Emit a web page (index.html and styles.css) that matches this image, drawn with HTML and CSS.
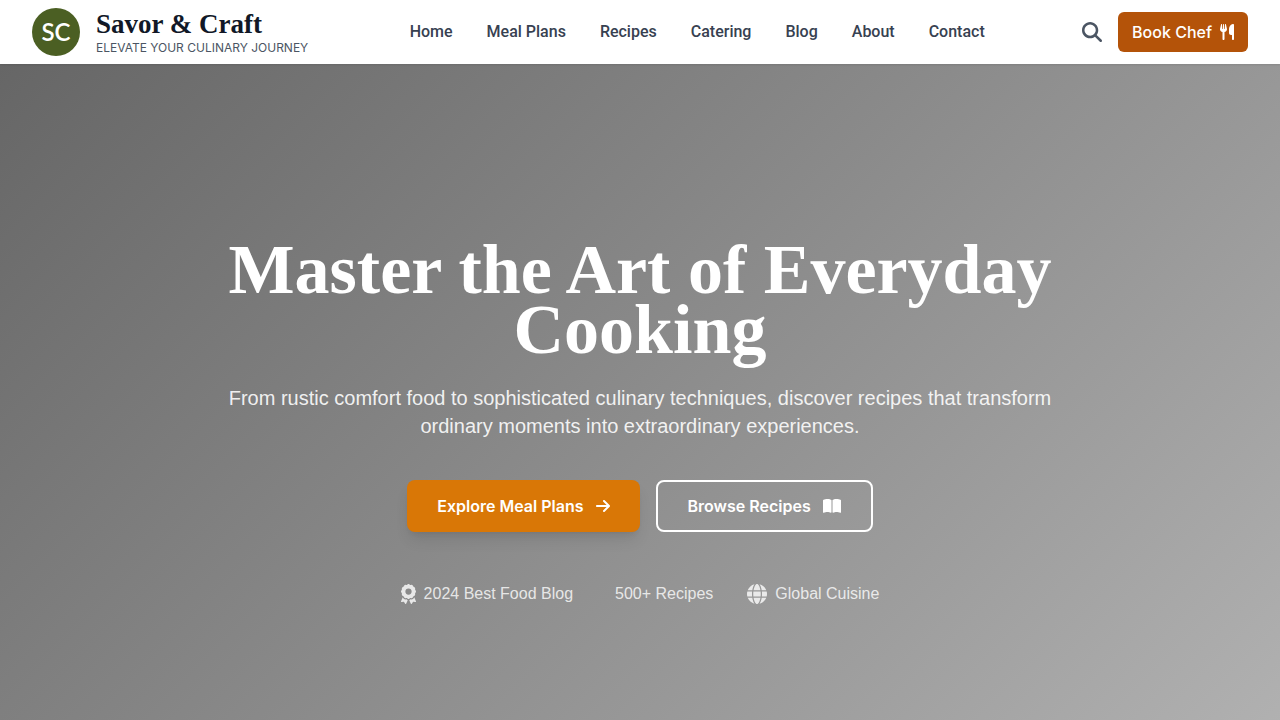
FILE: index.html
```html
<!DOCTYPE html>
<html lang="en">
<head>
  <meta charset="UTF-8">
  <meta name="viewport" content="width=device-width, initial-scale=1.0">
  <title>Savor &amp; Craft</title>
  <link rel="stylesheet" href="styles.css">
</head>
<body>
  <header class="header">
    <a href="#" class="brand">
      <span class="brand-logo">SC</span>
      <span class="brand-text">
        <span class="brand-name">Savor &amp; Craft</span>
        <span class="brand-tagline">Elevate Your Culinary Journey</span>
      </span>
    </a>

    <nav class="nav">
      <a href="#">Home</a>
      <a href="#">Meal Plans</a>
      <a href="#">Recipes</a>
      <a href="#">Catering</a>
      <a href="#">Blog</a>
      <a href="#">About</a>
      <a href="#">Contact</a>
    </nav>

    <div class="actions">
      <button type="button" class="search-btn" aria-label="Search">
        <svg class="icon-lg" viewBox="0 0 512 512"><path d="M416 208c0 45.9-14.9 88.3-40 122.7L502.6 457.4c12.5 12.5 12.5 32.8 0 45.3s-32.8 12.5-45.3 0L330.7 376c-34.4 25.2-76.8 40-122.7 40C93.1 416 0 322.9 0 208S93.1 0 208 0S416 93.1 416 208zM208 352a144 144 0 1 0 0-288 144 144 0 1 0 0 288z"/></svg>
      </button>
      <a href="#" class="book-btn">
        Book Chef
        <svg class="icon" viewBox="0 0 448 512"><path d="M416 0C400 0 288 32 288 176V288c0 35.3 28.7 64 64 64h32V480c0 17.7 14.3 32 32 32s32-14.3 32-32V352 240 32c0-17.7-14.3-32-32-32zM64 16C64 7.8 57.9 1 49.7 .1S34.2 4.6 32.4 12.5L2.1 148.8C.7 155.1 0 161.5 0 167.9c0 45.9 35.1 83.6 80 87.7V480c0 17.7 14.3 32 32 32s32-14.3 32-32V255.6c44.9-4.1 80-41.8 80-87.7c0-6.4-.7-12.8-2.1-19.1L191.6 12.5c-1.8-8-9.3-13.3-17.4-12.4S160 7.8 160 16V150.2c0 5.4-4.4 9.8-9.8 9.8c-5.1 0-9.3-3.9-9.8-9L127.9 14.6C127.2 6.3 120.3 0 112 0s-15.2 6.3-15.9 14.6L83.7 151c-.5 5.1-4.7 9-9.8 9c-5.4 0-9.8-4.4-9.8-9.8V16z"/></svg>
      </a>
    </div>
  </header>

  <main class="hero">
    <div class="hero-content">
      <h1>Master the Art of Everyday Cooking</h1>
      <p class="hero-text">From rustic comfort food to sophisticated culinary techniques, discover recipes that transform ordinary moments into extraordinary experiences.</p>

      <div class="hero-buttons">
        <a href="#" class="btn btn-primary">
          Explore Meal Plans
          <svg class="icon" viewBox="0 0 448 512"><path d="M438.6 278.6c12.5-12.5 12.5-32.8 0-45.3l-160-160c-12.5-12.5-32.8-12.5-45.3 0s-12.5 32.8 0 45.3L338.8 224 32 224c-17.7 0-32 14.3-32 32s14.3 32 32 32l306.7 0L233.4 393.4c-12.5 12.5-12.5 32.8 0 45.3s32.8 12.5 45.3 0l160-160z"/></svg>
        </a>
        <a href="#" class="btn btn-outline">
          Browse Recipes
          <svg class="icon" viewBox="0 0 576 512"><path d="M249.6 471.5c10.8 3.8 22.4-4.1 22.4-15.5V78.6c0-4.2-1.6-8.4-5-11C247.4 52 202.4 32 144 32C93.5 32 46.3 45.3 18.1 56.1C6.8 60.5 0 71.7 0 83.8V454.1c0 11.9 12.8 20.2 24.1 16.5C55.6 460.1 105.5 448 144 448c33.9 0 79 14 105.6 23.5zm76.8 0C353 462 398.1 448 432 448c38.5 0 88.4 12.1 119.9 22.6c11.3 3.8 24.1-4.6 24.1-16.5V83.8c0-12.1-6.8-23.3-18.1-27.6C529.7 45.3 482.5 32 432 32c-58.4 0-103.4 20-123 35.6c-3.3 2.6-5 6.8-5 11V456c0 11.4 11.7 19.3 22.4 15.5z"/></svg>
        </a>
      </div>

      <ul class="stats">
        <li>
          <svg class="icon-lg" viewBox="0 0 384 512"><path d="M173.8 5.5c11-7.3 25.4-7.3 36.4 0L228 17.2c6 3.9 13 5.8 20.1 5.4l21.3-1.3c13.2-.8 25.6 6.4 31.5 18.2l9.6 19.1c3.2 6.4 8.4 11.5 14.7 14.7L344.5 83c11.8 5.9 19 18.3 18.2 31.5l-1.3 21.3c-.4 7.1 1.5 14.2 5.4 20.1l11.8 17.8c7.3 11 7.3 25.4 0 36.4L366.8 228c-3.9 6-5.8 13-5.4 20.1l1.3 21.3c.8 13.2-6.4 25.6-18.2 31.5l-19.1 9.6c-6.4 3.2-11.5 8.4-14.7 14.7L301 344.5c-5.9 11.8-18.3 19-31.5 18.2l-21.3-1.3c-7.1-.4-14.2 1.5-20.1 5.4l-17.8 11.8c-11 7.3-25.4 7.3-36.4 0L156 366.8c-6-3.9-13-5.8-20.1-5.4l-21.3 1.3c-13.2 .8-25.6-6.4-31.5-18.2l-9.6-19.1c-3.2-6.4-8.4-11.5-14.7-14.7L39.5 301c-11.8-5.9-19-18.3-18.2-31.5l1.3-21.3c.4-7.1-1.5-14.2-5.4-20.1L5.5 210.2c-7.3-11-7.3-25.4 0-36.4L17.2 156c3.9-6 5.8-13 5.4-20.1l-1.3-21.3c-.8-13.2 6.4-25.6 18.2-31.5l19.1-9.6C65 70.2 70.2 65 73.4 58.6L83 39.5c5.9-11.8 18.3-19 31.5-18.2l21.3 1.3c7.1 .4 14.2-1.5 20.1-5.4L173.8 5.5zM272 192a80 80 0 1 0 -160 0 80 80 0 1 0 160 0zM1.3 441.8L44.4 339.3c.2 .1 .3 .2 .4 .4l9.6 19.1c11.7 23.2 36 37.3 62 35.8l21.3-1.3c.2 0 .5 0 .7 .2l17.8 11.8c5.1 3.3 10.5 5.9 16.1 7.7l-37.6 89.3c-2.3 5.5-7.4 9.2-13.3 9.7s-11.6-2.2-14.8-7.2L74.4 455.5l-56.1 8.3c-5.7 .8-11.4-1.5-15-6s-4.3-10.7-2.1-16zm248 60.4L211.7 413c5.6-1.8 11-4.3 16.1-7.7l17.8-11.8c.2-.1 .4-.2 .7-.2l21.3 1.3c26 1.5 50.3-12.6 62-35.8l9.6-19.1c.1-.2 .2-.3 .4-.4l43.2 102.5c2.2 5.3 1.4 11.4-2.1 16s-9.3 6.9-15 6l-56.1-8.3-32.2 49.2c-3.2 5-8.9 7.7-14.8 7.2s-11-4.3-13.3-9.7z"/></svg>
          2024 Best Food Blog
        </li>
        <li class="stat-plain">500+ Recipes</li>
        <li>
          <svg class="icon-lg" viewBox="0 0 512 512"><path d="M352 256c0 22.2-1.2 43.6-3.3 64H163.3c-2.2-20.4-3.3-41.8-3.3-64s1.2-43.6 3.3-64H348.7c2.2 20.4 3.3 41.8 3.3 64zm28.8-64H503.9c5.3 20.5 8.1 41.9 8.1 64s-2.8 43.5-8.1 64H380.8c2.1-20.6 3.2-42 3.2-64s-1.1-43.4-3.2-64zm112.6-32H376.7c-10-63.9-29.8-117.4-55.3-151.6c78.3 20.7 142 77.5 171.9 151.6zm-149.1 0H167.7c6.1-36.4 15.5-68.6 27-94.7c10.5-23.6 22.2-40.7 33.5-51.5C239.4 3.2 248.7 0 256 0s16.6 3.2 27.8 13.8c11.3 10.8 23 27.9 33.5 51.5c11.6 26 20.9 58.2 27 94.7zm-209 0H18.6C48.6 85.9 112.2 29.1 190.6 8.4C165.1 42.6 145.3 96.1 135.3 160zM8.1 192H131.2c-2.1 20.6-3.2 42-3.2 64s1.1 43.4 3.2 64H8.1C2.8 299.5 0 278.1 0 256s2.8-43.5 8.1-64zM194.7 446.6c-11.6-26-20.9-58.2-27-94.6H344.3c-6.1 36.4-15.5 68.6-27 94.6c-10.5 23.6-22.2 40.7-33.5 51.5C272.6 508.8 263.3 512 256 512s-16.6-3.2-27.8-13.8c-11.3-10.8-23-27.9-33.5-51.5zM135.3 352c10 63.9 29.8 117.4 55.3 151.6C112.2 482.9 48.6 426.1 18.6 352H135.3zm358.1 0c-30 74.1-93.6 130.9-171.9 151.6c25.5-34.2 45.2-87.7 55.3-151.6H493.4z"/></svg>
          Global Cuisine
        </li>
      </ul>
    </div>
  </main>
</body>
</html>
```
FILE: styles.css
```css
* {
  box-sizing: border-box;
  margin: 0;
  padding: 0;
}
body {
  font-family: "Liberation Sans", Arial, sans-serif;
  font-size: 16px;
  line-height: 24px;
  background: #fff;
  color: #1f2937;
}
a {
  color: inherit;
  text-decoration: none;
}
svg {
  display: block;
  fill: currentColor;
}
.icon {
  height: 16px;
}
.icon-lg {
  height: 20px;
}

/* Header */
.header {
  position: sticky;
  top: 0;
  z-index: 10;
  display: flex;
  align-items: center;
  justify-content: space-between;
  padding: 8px 32px;
  background: #fff;
  box-shadow: 0 1px 2px rgba(0, 0, 0, 0.1);
}
.brand {
  display: flex;
  align-items: center;
  gap: 16px;
  padding-right: 4px;
}
.brand-logo {
  display: flex;
  align-items: center;
  justify-content: center;
  width: 48px;
  height: 48px;
  border-radius: 50%;
  background: #4b5f23;
  color: #fff;
  font-family: Lato, sans-serif;
  font-size: 24px;
  font-weight: 600;
}
.brand-text {
  display: flex;
  flex-direction: column;
}
.brand-name {
  color: #111827;
  font-family: "Liberation Serif", serif;
  font-size: 27px;
  font-weight: 700;
  line-height: 32px;
}
.brand-tagline {
  color: #4b5563;
  font-family: Inter, sans-serif;
  font-size: 12px;
  line-height: 16px;
  text-transform: uppercase;
}
.nav {
  display: flex;
  gap: 34px;
  color: #374151;
  font-family: Roboto, sans-serif;
  font-weight: 500;
}
.actions {
  display: flex;
  align-items: center;
  gap: 16px;
}
.search-btn {
  border: none;
  background: none;
  color: #4b5563;
  cursor: pointer;
}
.book-btn {
  display: flex;
  align-items: center;
  gap: 8px;
  padding: 8px 14px;
  border-radius: 6px;
  background: #b45309;
  color: #fff;
  font-family: Inter, sans-serif;
  font-weight: 500;
}

/* Hero */
.hero {
  display: flex;
  align-items: center;
  justify-content: center;
  min-height: 100vh;
  background: linear-gradient(135deg, #666, #b3b3b3);
  color: #fff;
  text-align: center;
}
.hero-content {
  max-width: 896px;
  padding: 0 32px;
}
h1 {
  margin-bottom: 24px;
  font-family: "Liberation Serif", serif;
  font-size: 70px;
  font-weight: 700;
  line-height: 60px;
}
.hero-text {
  margin-bottom: 40px;
  color: rgba(255, 255, 255, 0.9);
  font-size: 20px;
  line-height: 28px;
}
.hero-buttons {
  display: flex;
  justify-content: center;
  gap: 16px;
  margin-bottom: 48px;
}
.btn {
  display: flex;
  align-items: center;
  gap: 12px;
  padding: 14px 30px;
  border-radius: 8px;
  font-family: Inter, sans-serif;
  font-weight: 600;
}
.btn-primary {
  background: #d97706;
  box-shadow: 0 10px 15px -3px rgba(0, 0, 0, 0.1), 0 4px 6px -4px rgba(0, 0, 0, 0.1);
}
.btn-outline {
  padding: 12px 30px;
  border: 2px solid #fff;
}
.stats {
  display: flex;
  justify-content: center;
  gap: 34px;
  color: rgba(255, 255, 255, 0.8);
  line-height: 28px;
  list-style: none;
}
.stats li {
  display: flex;
  align-items: center;
  gap: 8px;
}
.stats .stat-plain {
  padding-left: 8px;
}
```
